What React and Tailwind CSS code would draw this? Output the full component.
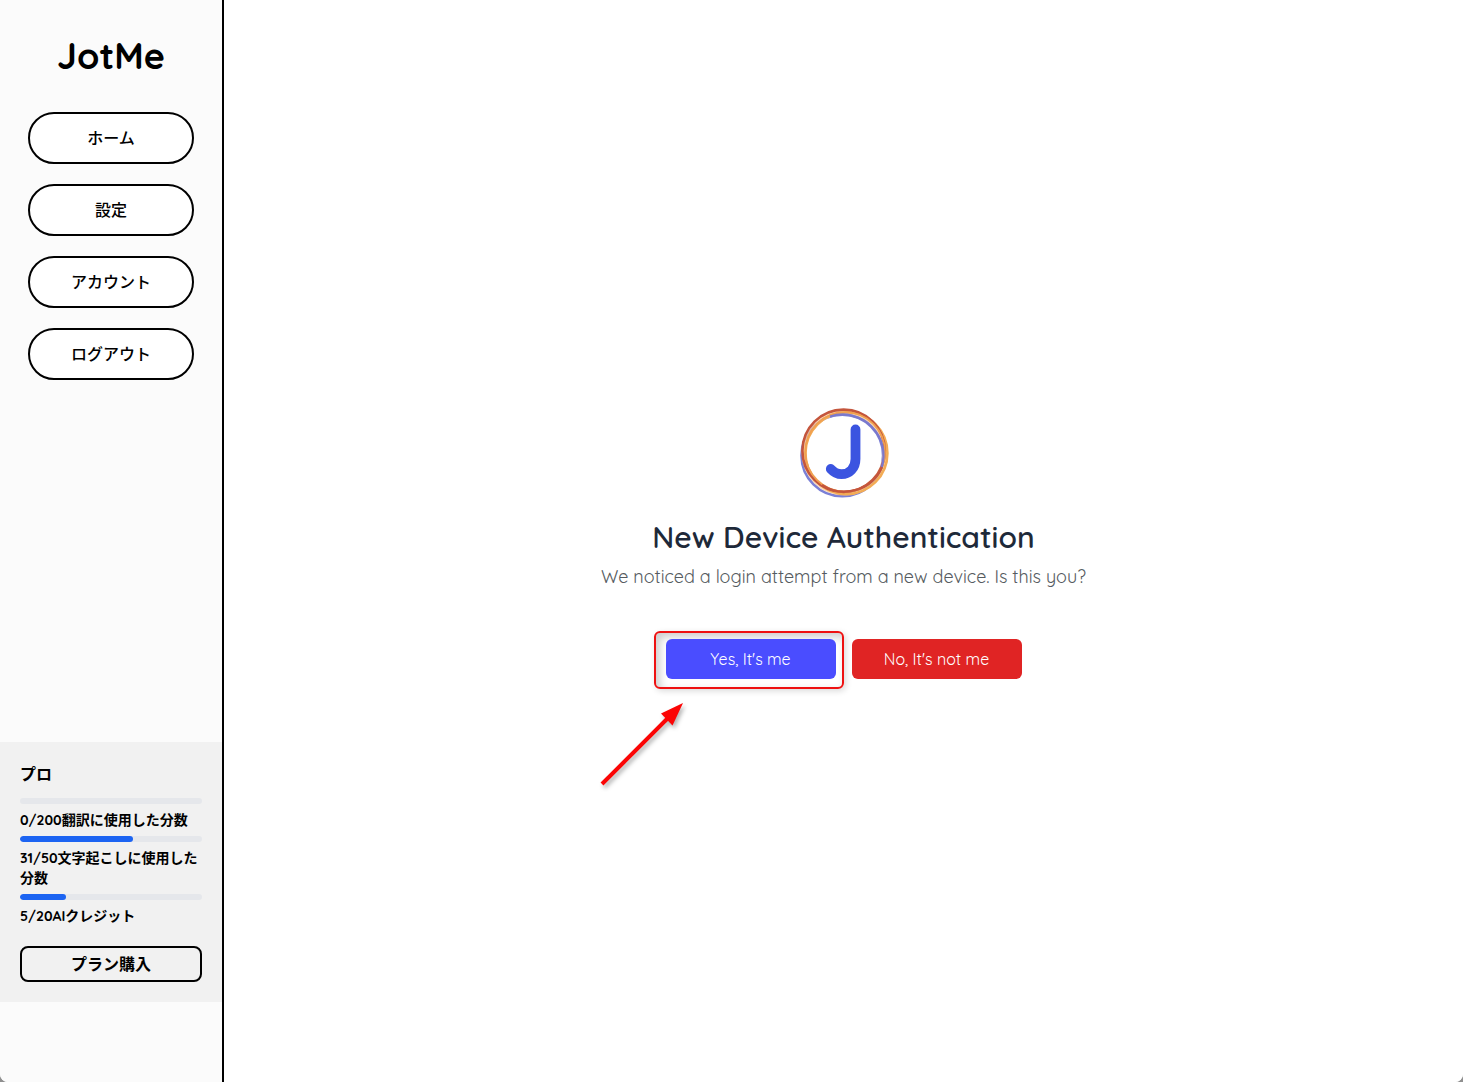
import React from 'react';

const navItems = ['ホーム', '設定', 'アカウント', 'ログアウト'];

const usage = [
  { percent: 0, label: '0/200翻訳に使用した分数' },
  { percent: 62, label: '31/50文字起こしに使用した分数' },
  { percent: 25, label: '5/20AIクレジット' },
];

const Logo = () => (
  <svg className="h-[100px] w-[100px]" viewBox="0 0 100 100" fill="none" aria-hidden="true">
    {/* Overlapping rings */}
    <circle cx="48.3" cy="52.5" r="40.8" stroke="#7b80d6" strokeWidth="2.6" />
    <circle cx="50.5" cy="49.5" r="40.5" stroke="#f8c79a" strokeWidth="5" opacity="0.75" />
    <circle cx="52.4" cy="50.2" r="41" stroke="#f3ac55" strokeWidth="2.6" />
    <circle cx="49.6" cy="47.800" r="41.2" stroke="#c4553c" strokeWidth="2.6" />
    <circle cx="51.2" cy="49" r="39.8" stroke="#f0a050" strokeWidth="1.8" />
    <path d="M36 13.500A40.8 40.8 0 0 1 87.500 65" stroke="#7b78cc" strokeWidth="2.2" />
    <path d="M88 64A41 41 0 0 1 28 82" stroke="#c4553c" strokeWidth="2.4" />
    <path d="M61.5 26.500V56C61.5 65 55.500 71.200 47.500 71.200C43 71.200 39.500 69 36.800 66" stroke="#3b54e0" strokeWidth="9.800" strokeLinecap="round" />
  </svg>
);

const Sidebar = () => (
  <aside className="flex w-56 shrink-0 flex-col border-r-2 border-black bg-[#fbfbfb] pt-9 text-black">
    <h1 className="text-center text-4xl font-bold">JotMe</h1>
    <nav className="mt-9 flex flex-col gap-5 px-7">
      {navItems.map((item) => (
        <button key={item} type="button" className="h-13 rounded-full border-2 border-black bg-white text-base font-medium">
          {item}
        </button>
      ))}
    </nav>

    <section className="mt-auto mb-20 bg-[#f1f1f1] p-5">
      <h2 className="text-base font-bold">プロ</h2>
      <div className="mt-3 flex flex-col gap-1.5">
        {usage.map(({ percent, label }) => (
          <React.Fragment key={label}>
            <div className="h-1.5 overflow-hidden rounded-full bg-gray-200">
              <div className="h-full rounded-full bg-[#1c64f2]" style={{ width: `${percent}%` }} />
            </div>
            <p className="text-sm font-bold">{label}</p>
          </React.Fragment>
        ))}
      </div>
      <button type="button" className="mt-5 h-9 w-full rounded-lg border-2 border-black text-base font-bold">
        プラン購入
      </button>
    </section>
  </aside>
);

// Red frame and arrow laid over the confirm button
const Highlight = () => (
  <>
    <span className="pointer-events-none absolute -top-2 -right-2 -bottom-2.5 -left-3 rounded-md border-2 border-[#ee1111] shadow-[2px_2px_6px_rgba(0,0,0,0.15),inset_4px_4px_9px_rgba(0,0,0,0.2)]" />
    <svg className="pointer-events-none absolute top-14 -left-18 h-24 w-24 drop-shadow-[2px_3px_2px_rgba(0,0,0,0.3)]" viewBox="0 0 96 96" aria-hidden="true">
      <path d="M8 89L75 22" stroke="#fb0505" strokeWidth="4" />
      <path d="M89 8L67 18.500L78.500 30.500Z" fill="#fb0505" />
    </svg>
  </>
);

const DeviceAuth = () => (
  <main className="flex flex-1 flex-col items-center justify-center bg-white text-center">
    <Logo />
    <h2 className="mt-4 text-3xl font-semibold text-gray-800">New Device Authentication</h2>
    <p className="mt-2 text-lg font-normal text-[#555b60]">
      We noticed a login attempt from a new device. Is this you?
    </p>
    <div className="mt-12 flex gap-4 text-base text-white">
      <div className="relative">
        <Highlight />
        <button type="button" className="relative h-10 w-[170px] rounded-md bg-[#4a4dff]">Yes, It's me</button>
      </div>
      <button type="button" className="h-10 w-[170px] rounded-md bg-[#e02424]">No, It's not me</button>
    </div>
  </main>
);

const App = () => (
  <div className="bg-[#8f8f8f] font-[Quicksand,Lato,'Noto_Sans_CJK_JP',sans-serif]">
    <div className="flex min-h-screen overflow-hidden rounded-b-lg bg-white">
      <Sidebar />
      <DeviceAuth />
    </div>
  </div>
);

export default App;
